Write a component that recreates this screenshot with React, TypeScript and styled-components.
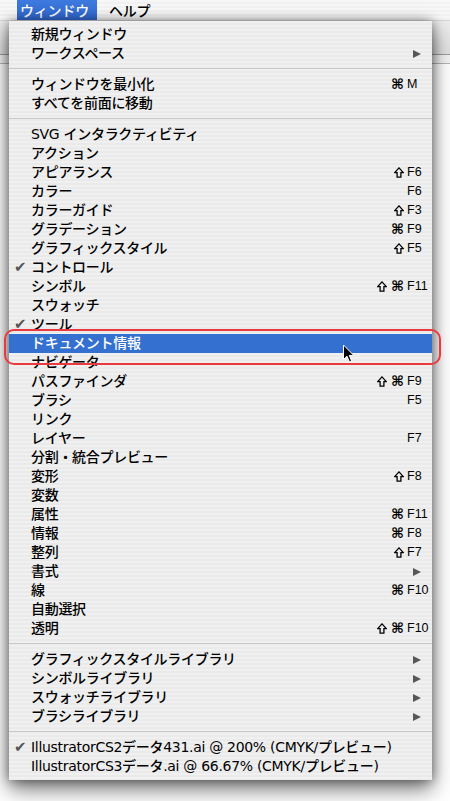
import React from "react";
import styled, { createGlobalStyle } from "styled-components";

const Global = createGlobalStyle`
  html, body { margin: 0; padding: 0; background: #ffffff; }
  #root { width: 450px; height: 801px; }
`;

const Screen = styled.div`
  position: relative;
  width: 450px;
  height: 801px;
  overflow: hidden;
  background: #ffffff;
  display: flex;
  flex-direction: column;
  font-family: "DejaVu Sans", "Noto Sans CJK JP", sans-serif;
`;

const MenuBar = styled.div`
  height: 21px;
  flex: none;
  display: flex;
  align-items: stretch;
  gap: 9px;
  padding-left: 17px;
  background: repeating-linear-gradient(180deg, #f8f8f8 0 2px, #f2f2f2 2px 4px);
  border-bottom: 1px solid #d6d6d6;
  box-sizing: border-box;
`;

const BarItem = styled.div<{ $open?: boolean }>`
  display: flex;
  align-items: center;
  padding: 0 8px 0 3px;
  font-family: "Noto Sans CJK JP", sans-serif;
  font-size: 14px;
  font-weight: 500;
  letter-spacing: -0.2px;
  color: ${(p) => (p.$open ? "#ffffff" : "#000000")};
  background: ${(p) => (p.$open ? "linear-gradient(180deg, #3f7be0 0%, #2f66cc 100%)" : "transparent")};
`;

const Toolbar = styled.div`
  height: 33px;
  flex: none;
  background: linear-gradient(180deg, #ececec 0%, #e0e0e0 100%);
  border-bottom: 1px solid #9c9c9c;
`;

const Strip = styled.div`
  height: 8px;
  flex: none;
  background: #f3f3f3;
  border-bottom: 1px solid #b4b4b4;
`;

const Canvas = styled.div`
  flex: 1;
  background: #ffffff;
`;

const Menu = styled.div`
  position: absolute;
  top: 21px;
  left: 9px;
  width: 423px;
  padding: 4px 0 4px;
  box-sizing: border-box;
  background: repeating-linear-gradient(180deg, #f0f0f0 0 2px, #eaeaea 2px 4px);
  box-shadow: 0 9px 20px rgba(0, 0, 0, 0.55), 0 0 10px rgba(0, 0, 0, 0.4);
`;

const Row = styled.div<{ $active?: boolean }>`
  height: 19px;
  display: grid;
  grid-template-columns: 22px 1fr auto 25px;
  align-items: center;
  font-size: 14px;
  font-weight: 500;
  letter-spacing: -0.3px;
  color: ${(p) => (p.$active ? "#ffffff" : "#000000")};
  background: ${(p) => (p.$active ? "#3470d0" : "transparent")};
`;

const Check = styled.span<{ $active?: boolean }>`
  font-family: "DejaVu Sans", sans-serif;
  font-size: 15px;
  font-weight: 400;
  color: ${(p) => (p.$active ? "#ffffff" : "#555555")};
  padding-left: 5px;
  line-height: 1;
`;

const Label = styled.span`
  white-space: nowrap;
  line-height: 19px;
`;

const Mods = styled.span`
  display: flex;
  justify-content: flex-end;
  align-items: center;
  gap: 4px;
  padding-right: 3px;
  height: 19px;
`;

const Cmd = styled.span`
  font-family: "DejaVu Sans", sans-serif;
  font-size: 14px;
  font-weight: 700;
  line-height: 19px;
  letter-spacing: 0;
`;

const ShiftIcon = styled.svg`
  display: block;
  flex: none;
`;

const Key = styled.span`
  font-family: "Liberation Sans", sans-serif;
  font-size: 12.5px;
  font-weight: 400;
  letter-spacing: 0;
  line-height: 19px;
`;

const Arrow = styled.span`
  width: 0;
  height: 0;
  margin-left: 6px;
  border-top: 4.5px solid transparent;
  border-bottom: 4.5px solid transparent;
  border-left: 8px solid #575757;
`;

const Separator = styled.div`
  height: 1px;
  margin: 5px 0 6px;
  background: #c8c8c8;
`;

const Ring = styled.div`
  position: absolute;
  left: 4px;
  top: 329px;
  width: 437px;
  height: 36px;
  box-sizing: border-box;
  border: 2px solid #ea3a3f;
  border-radius: 10px;
`;

const Pointer = styled.svg`
  position: absolute;
  left: 342px;
  top: 344px;
`;

type Mod = "shift" | "cmd";

type Item = {
  label: string;
  check?: boolean;
  mods?: Mod[];
  keyName?: string;
  sub?: boolean;
  active?: boolean;
};

const S: Mod = "shift";
const C: Mod = "cmd";

const groups: Item[][] = [
  [{ label: "新規ウィンドウ" }, { label: "ワークスペース", sub: true }],
  [{ label: "ウィンドウを最小化", mods: [C], keyName: "M" }, { label: "すべてを前面に移動" }],
  [
    { label: "SVG インタラクティビティ" },
    { label: "アクション" },
    { label: "アピアランス", mods: [S], keyName: "F6" },
    { label: "カラー", keyName: "F6" },
    { label: "カラーガイド", mods: [S], keyName: "F3" },
    { label: "グラデーション", mods: [C], keyName: "F9" },
    { label: "グラフィックスタイル", mods: [S], keyName: "F5" },
    { label: "コントロール", check: true },
    { label: "シンボル", mods: [S, C], keyName: "F11" },
    { label: "スウォッチ" },
    { label: "ツール", check: true },
    { label: "ドキュメント情報", active: true },
    { label: "ナビゲータ" },
    { label: "パスファインダ", mods: [S, C], keyName: "F9" },
    { label: "ブラシ", keyName: "F5" },
    { label: "リンク" },
    { label: "レイヤー", keyName: "F7" },
    { label: "分割・統合プレビュー" },
    { label: "変形", mods: [S], keyName: "F8" },
    { label: "変数" },
    { label: "属性", mods: [C], keyName: "F11" },
    { label: "情報", mods: [C], keyName: "F8" },
    { label: "整列", mods: [S], keyName: "F7" },
    { label: "書式", sub: true },
    { label: "線", mods: [C], keyName: "F10" },
    { label: "自動選択" },
    { label: "透明", mods: [S, C], keyName: "F10" },
  ],
  [
    { label: "グラフィックスタイルライブラリ", sub: true },
    { label: "シンボルライブラリ", sub: true },
    { label: "スウォッチライブラリ", sub: true },
    { label: "ブラシライブラリ", sub: true },
  ],
  [
    { label: "IllustratorCS2データ431.ai @ 200% (CMYK/プレビュー)", check: true },
    { label: "IllustratorCS3データ.ai @ 66.67% (CMYK/プレビュー)" },
  ],
];

const Shift = () => (
  <ShiftIcon width="10" height="11" viewBox="0 0 10 11">
    <path
      d="M5 0.9 L9.3 5.6 L6.9 5.6 L6.9 10.2 L3.1 10.2 L3.1 5.6 L0.7 5.6 Z"
      fill="none"
      stroke="#000"
      strokeWidth="1.3"
      strokeLinejoin="miter"
    />
  </ShiftIcon>
);

const MenuRow: React.FC<{ item: Item }> = ({ item }) => (
  <Row $active={item.active}>
    <Check $active={item.active}>{item.check ? "✔" : ""}</Check>
    <Label>{item.label}</Label>
    <Mods>
      {(item.mods ?? []).map((m, i) => (m === "shift" ? <Shift key={i} /> : <Cmd key={i}>⌘</Cmd>))}
    </Mods>
    {item.sub ? <Arrow /> : <Key>{item.keyName ?? ""}</Key>}
  </Row>
);

export default function App() {
  return (
    <>
      <Global />
      <Screen>
        <MenuBar>
          <BarItem $open>ウィンドウ</BarItem>
          <BarItem>ヘルプ</BarItem>
        </MenuBar>
        <Toolbar />
        <Strip />
        <Canvas />
        <Menu>
          {groups.map((g, gi) => (
            <React.Fragment key={gi}>
              {gi > 0 && <Separator />}
              {g.map((it, ii) => (
                <MenuRow key={ii} item={it} />
              ))}
            </React.Fragment>
          ))}
        </Menu>
        <Ring />
        <Pointer width="14" height="20" viewBox="0 0 14 20">
          <path
            d="M1.5 1 L1.5 15.5 L5 12.2 L7.4 17.8 L9.6 16.9 L7.3 11.4 L11.8 11.4 Z"
            fill="#000"
            stroke="#fff"
            strokeWidth="1"
            strokeLinejoin="round"
          />
        </Pointer>
      </Screen>
    </>
  );
}
